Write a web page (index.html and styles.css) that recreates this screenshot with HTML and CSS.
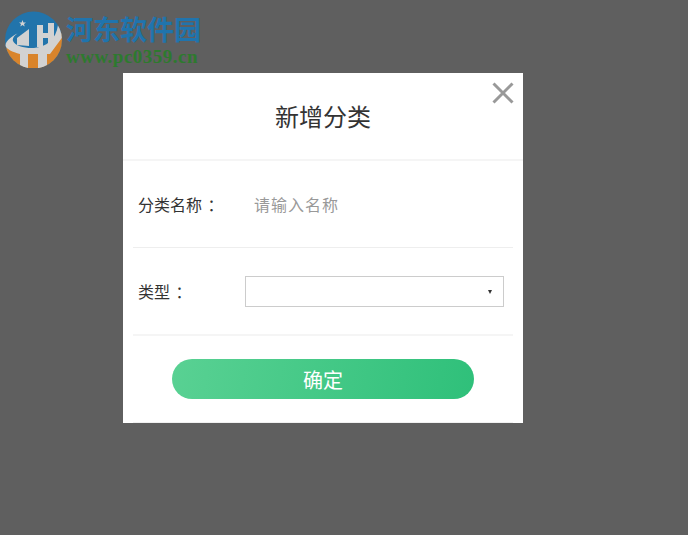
FILE: index.html
```html
<!DOCTYPE html>
<html lang="zh-CN">
<head>
    <meta charset="UTF-8">
    <meta name="viewport" content="width=device-width, initial-scale=1.0">
    <title>新增分类</title>
    <link rel="stylesheet" href="styles.css">
</head>
<body>
    <!-- 水印 logo -->
    <div class="logo">
        <svg class="logo-icon" width="58" height="58" viewBox="0 0 58 58">
            <defs>
                <clipPath id="logoClip"><circle cx="29.5" cy="30" r="28.5"></circle></clipPath>
            </defs>
            <g clip-path="url(#logoClip)">
                <rect width="60" height="60" fill="#2274ab"></rect>
                <path d="M58 22 L46 40 L0 38 L0 60 L60 60 L60 22 Z" fill="#d9842b"></path>
                <path d="M17 22 C11 24 8 28 9 31 C11 36 21 38.5 30 38 C42 37 52 30 54 15 L60 15 L60 25 L46 44 L43 44 L43 60 L34 60 L34 44 L24 44 L24 60 L16 60 L16 44 C8 42 3 39 1 36 C2 30 9 25 17 22 Z" fill="#d2d2d2"></path>
                <path d="M13 35 L13 28 L25 19 L25 36 Z" fill="#d2d2d2"></path>
                <path d="M33 37 L33 15 L39 15 L39 23 L44 23 L44 13 L50 13 L50 31 L44 34 L44 28 L39 28 L39 37 Z" fill="#d2d2d2"></path>
                <path d="M18.5 10 L19.4 12.4 L22 12.5 L20 14 L20.7 16.5 L18.5 15 L16.3 16.5 L17 14 L15 12.5 L17.6 12.4 Z" fill="#d2d2d2"></path>
            </g>
        </svg>
        <div class="logo-text">
            <div class="logo-name">河东软件园</div>
            <div class="logo-url">www.pc0359.cn</div>
        </div>
    </div>

    <div class="dialog">
        <div class="dialog-header">
            <h2 class="dialog-title">新增分类</h2>
            <svg class="dialog-close" width="22" height="22" viewBox="0 0 22 22">
                <path d="M1.5 1.5 L20.5 20.5 M20.5 1.5 L1.5 20.5" stroke="#999" stroke-width="3" fill="none"></path>
            </svg>
        </div>

        <div class="form-row">
            <label class="form-label">分类名称&nbsp;<span class="form-colon">：</span></label>
            <input class="form-input" type="text" placeholder="请输入名称">
        </div>

        <div class="form-row form-row-thick">
            <label class="form-label">类型&nbsp;<span class="form-colon">：</span></label>
            <div class="select-wrap">
                <select class="form-select"></select>
            </div>
        </div>

        <div class="form-footer">
            <button class="btn-confirm">确定</button>
        </div>
    </div>
</body>
</html>
```

FILE: styles.css
```css
* {
    margin: 0;
    padding: 0;
    box-sizing: border-box;
}

html, body {
    height: 100%;
}

body {
    font-family: "Noto Sans CJK SC", "Noto Sans", sans-serif;
    color: #333;
    background-color: #5f5f5f;
    padding: 73px 0 0 123px;
    overflow: hidden;
}

.logo {
    position: absolute;
    top: 10px;
    left: 4px;
    display: flex;
    gap: 4px;
}

.logo-icon {
    display: block;
}

.logo-text {
    font-family: "Liberation Serif", "Noto Sans CJK SC", serif;
    font-weight: bold;
}

.logo-name {
    font-family: "Noto Sans CJK SC", sans-serif;
    font-weight: 700;
    font-size: 27px;
    line-height: 38px;
    color: #2074ad;
}

.logo-url {
    font-size: 19px;
    line-height: 18px;
    letter-spacing: 0.5px;
    color: #2d7a2e;
}

.dialog {
    position: relative;
    width: 400px;
    height: 350px;
    background-color: #fff;
}

.dialog-header {
    height: 88px;
    border-bottom: 2px solid #f5f5f5;
    text-align: center;
}

.dialog-title {
    font-size: 24px;
    font-weight: normal;
    line-height: 86px;
    color: #333;
}

.dialog-close {
    position: absolute;
    top: 9px;
    right: 9px;
}

.form-row {
    display: flex;
    align-items: center;
    height: 87px;
    margin: 0 10px;
    padding: 0 9px 0 5px;
    border-bottom: 1px solid #eee;
}

.form-row-thick {
    height: 88px;
    border-bottom: 2px solid #f5f5f5;
}

.form-label {
    width: 107px;
    flex-shrink: 0;
    font-size: 16px;
    color: #333;
}

/* 冒号居中的字形 */
.form-colon {
    font-family: "Noto Sans CJK TC", sans-serif;
    margin-left: 2px;
}

.form-input {
    flex: 1;
    height: 30px;
    padding-left: 9px;
    border: none;
    outline: none;
    font-family: inherit;
    font-size: 16px;
    letter-spacing: 1px;
}

.form-input::placeholder {
    color: #999;
}

.select-wrap {
    position: relative;
    flex: 1;
    height: 31px;
}

.select-wrap::after {
    content: "";
    position: absolute;
    top: 14px;
    right: 12px;
    border-top: 4px solid #333;
    border-left: 2.5px solid transparent;
    border-right: 2.5px solid transparent;
}

.form-select {
    display: block;
    width: 100%;
    height: 31px;
    appearance: none;
    border: 1px solid #ccc;
    border-radius: 0;
    background-color: #fff;
    font-family: inherit;
    font-size: 14px;
}

.form-footer {
    height: 87px;
    margin: 0 10px;
    padding-top: 23px;
    border-bottom: 1px solid #f0f0f0;
    text-align: center;
}

.btn-confirm {
    width: 302px;
    height: 40px;
    border: none;
    border-radius: 20px;
    background: linear-gradient(100deg, #59d193 0%, #2fc07a 100%);
    color: #fff;
    font-family: inherit;
    font-size: 20px;
}
```
